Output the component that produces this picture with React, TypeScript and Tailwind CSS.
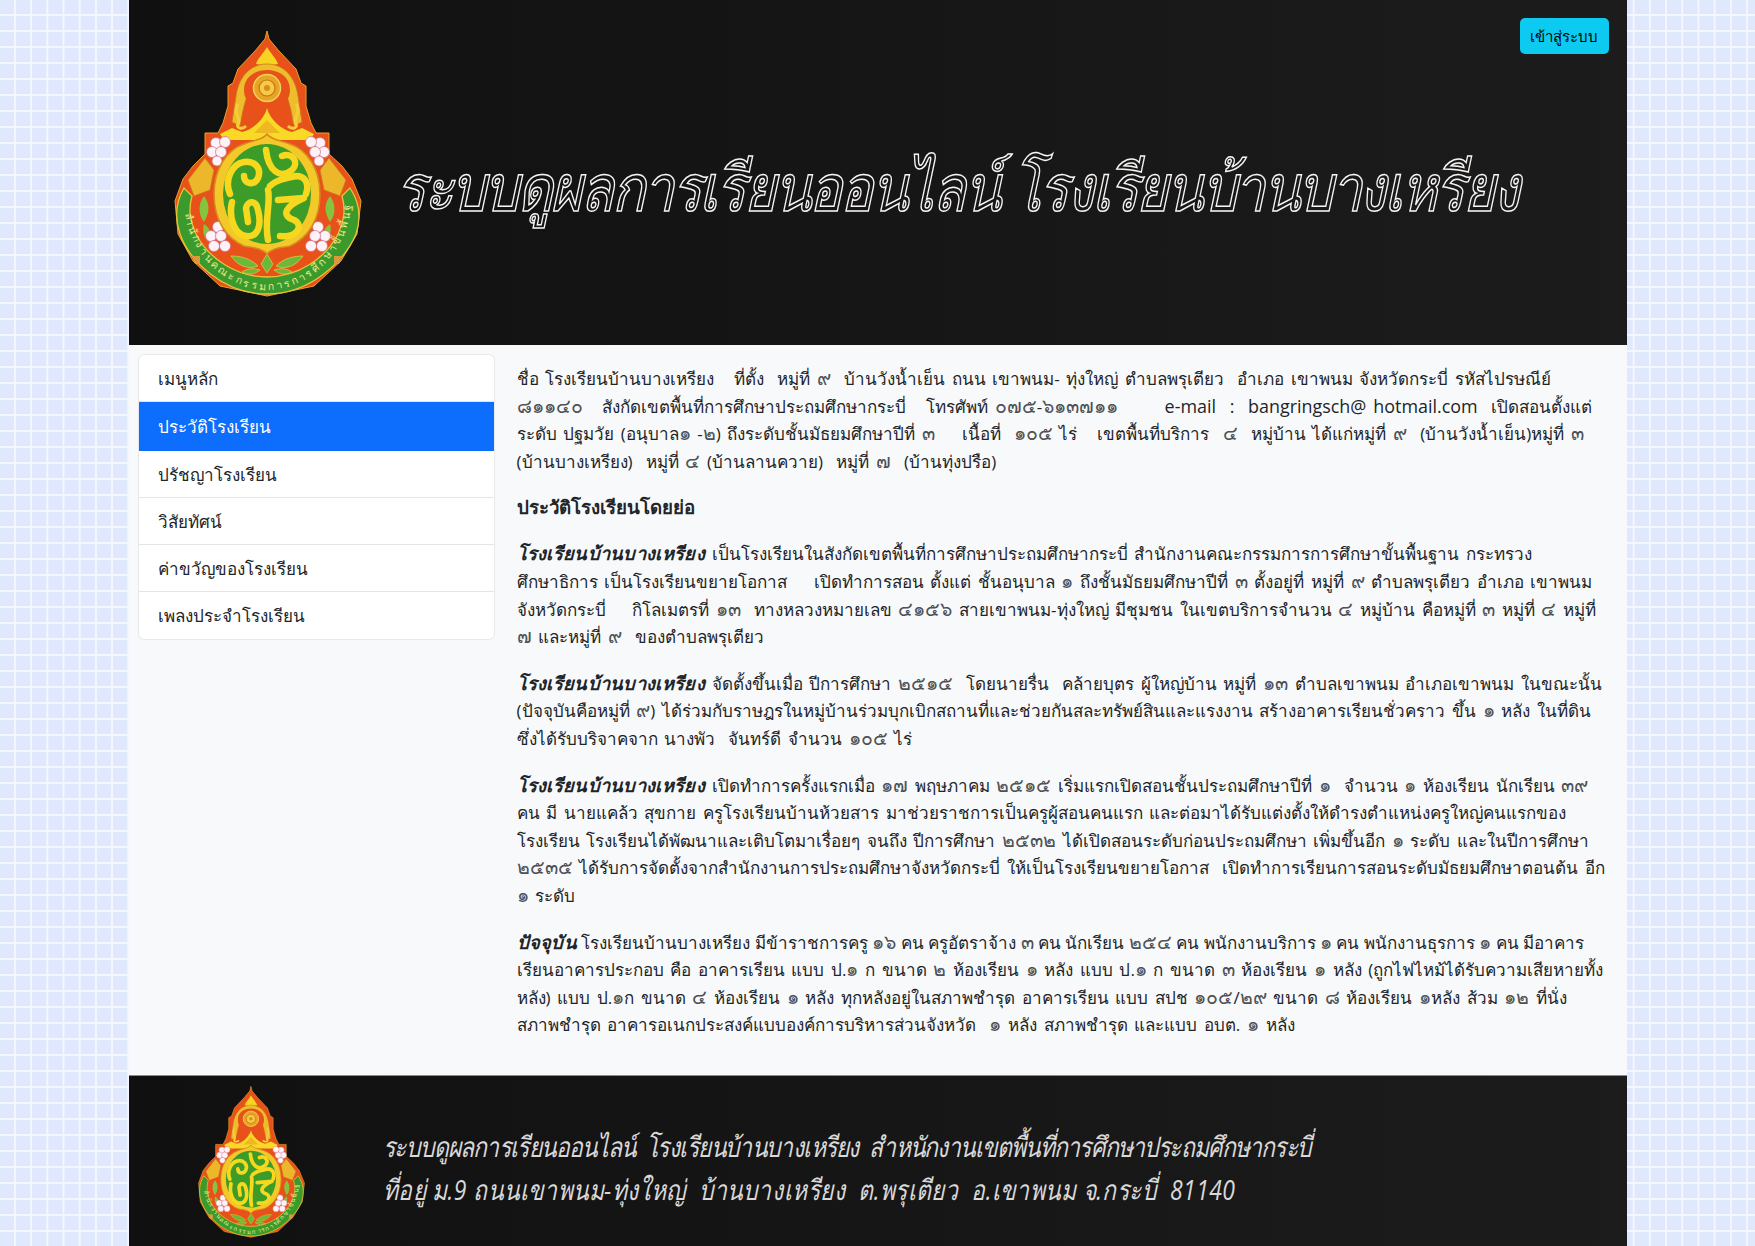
import React from 'react'

const menu = ['เมนูหลัก', 'ประวัติโรงเรียน', 'ปรัชญาโรงเรียน', 'วิสัยทัศน์', 'ค่าขวัญของโรงเรียน', 'เพลงประจำโรงเรียน']

const paragraphs: { lead?: string; tightFirst?: boolean; lines: string[] }[] = [
    {
        lines: [
            'ชื่อ โรงเรียนบ้านบางเหรียง   ที่ตั้ง  หมู่ที่ ๙  บ้านวังน้ำเย็น ถนน เขาพนม- ทุ่งใหญ่ ตำบลพรุเตียว  อำเภอ เขาพนม จังหวัดกระบี่ รหัสไปรษณีย์',
            '๘๑๑๔๐   สังกัดเขตพื้นที่การศึกษาประถมศึกษากระบี่   โทรศัพท์ ๐๗๕-๖๑๓๗๑๑       e-mail  :  bangringsch@ hotmail.com  เปิดสอนตั้งแต่',
            'ระดับ ปฐมวัย (อนุบาล๑ -๒) ถึงระดับชั้นมัธยมศึกษาปีที่ ๓    เนื้อที่  ๑๐๕ ไร่   เขตพื้นที่บริการ  ๔  หมู่บ้าน ได้แก่หมู่ที่ ๙  (บ้านวังน้ำเย็น)หมู่ที่ ๓',
            '(บ้านบางเหรียง)  หมู่ที่ ๔ (บ้านลานควาย)  หมู่ที่ ๗  (บ้านทุ่งปรือ)',
        ],
    },
    {
        lead: 'โรงเรียนบ้านบางเหรียง',
        lines: [
            ' เป็นโรงเรียนในสังกัดเขตพื้นที่การศึกษาประถมศึกษากระบี่ สำนักงานคณะกรรมการการศึกษาขั้นพื้นฐาน กระทรวง',
            'ศึกษาธิการ เป็นโรงเรียนขยายโอกาส    เปิดทำการสอน ตั้งแต่ ชั้นอนุบาล ๑ ถึงชั้นมัธยมศึกษาปีที่ ๓ ตั้งอยู่ที่ หมู่ที่ ๙ ตำบลพรุเตียว อำเภอ เขาพนม',
            'จังหวัดกระบี่    กิโลเมตรที่ ๑๓  ทางหลวงหมายเลข ๔๑๕๖ สายเขาพนม-ทุ่งใหญ่ มีชุมชน ในเขตบริการจำนวน ๔ หมู่บ้าน คือหมู่ที่ ๓ หมู่ที่ ๔ หมู่ที่',
            '๗ และหมู่ที่ ๙  ของตำบลพรุเตียว',
        ],
    },
    {
        lead: 'โรงเรียนบ้านบางเหรียง',
        lines: [
            ' จัดตั้งขึ้นเมื่อ ปีการศึกษา ๒๕๑๕  โดยนายรื่น  คล้ายบุตร ผู้ใหญ่บ้าน หมู่ที่ ๑๓ ตำบลเขาพนม อำเภอเขาพนม ในขณะนั้น',
            '(ปัจจุบันคือหมู่ที่ ๙) ได้ร่วมกับราษฎรในหมู่บ้านร่วมบุกเบิกสถานที่และช่วยกันสละทรัพย์สินและแรงงาน สร้างอาคารเรียนชั่วคราว ขึ้น ๑ หลัง ในที่ดิน',
            'ซึ่งได้รับบริจาคจาก นางพัว  จันทร์ดี จำนวน ๑๐๕ ไร่',
        ],
    },
    {
        lead: 'โรงเรียนบ้านบางเหรียง',
        lines: [
            ' เปิดทำการครั้งแรกเมื่อ ๑๗ พฤษภาคม ๒๕๑๕ เริ่มแรกเปิดสอนชั้นประถมศึกษาปีที่ ๑  จำนวน ๑ ห้องเรียน นักเรียน ๓๙',
            'คน มี นายแคล้ว สุขกาย ครูโรงเรียนบ้านห้วยสาร มาช่วยราชการเป็นครูผู้สอนคนแรก และต่อมาได้รับแต่งตั้งให้ดำรงตำแหน่งครูใหญ่คนแรกของ',
            'โรงเรียน โรงเรียนได้พัฒนาและเติบโตมาเรื่อยๆ จนถึง ปีการศึกษา ๒๕๓๒ ได้เปิดสอนระดับก่อนประถมศึกษา เพิ่มขึ้นอีก ๑ ระดับ และในปีการศึกษา',
            '๒๕๓๕ ได้รับการจัดตั้งจากสำนักงานการประถมศึกษาจังหวัดกระบี่ ให้เป็นโรงเรียนขยายโอกาส  เปิดทำการเรียนการสอนระดับมัธยมศึกษาตอนต้น อีก',
            '๑ ระดับ',
        ],
    },
    {
        lead: 'ปัจจุบัน',
        tightFirst: true,
        lines: [
            ' โรงเรียนบ้านบางเหรียง มีข้าราชการครู ๑๖ คน ครูอัตราจ้าง ๓ คน นักเรียน ๒๕๔ คน พนักงานบริการ ๑ คน พนักงานธุรการ ๑ คน มีอาคาร',
            'เรียนอาคารประกอบ คือ อาคารเรียน แบบ ป.๑ ก ขนาด ๒ ห้องเรียน ๑ หลัง แบบ ป.๑ ก ขนาด ๓ ห้องเรียน ๑ หลัง (ถูกไฟไหม้ได้รับความเสียหายทั้ง',
            'หลัง) แบบ ป.๑ก ขนาด ๔ ห้องเรียน ๑ หลัง ทุกหลังอยู่ในสภาพชำรุด อาคารเรียน แบบ สปช ๑๐๕/๒๙ ขนาด ๘ ห้องเรียน ๑หลัง ส้วม ๑๒ ที่นั่ง',
            'สภาพชำรุด อาคารอเนกประสงค์แบบองค์การบริหารส่วนจังหวัด  ๑ หลัง สภาพชำรุด และแบบ อบต. ๑ หลัง',
        ],
    },
]

// thai digits and the mail address are set a bit larger than the rest
const Line: React.FC<{ text: string }> = ({ text }) => (
    <>
        {text.split(/([๐-๙]+|e-mail.*\.com)/).map((part, i) => {
            if (/^[๐-๙]/.test(part)) return <span key={i} className="text-[19.5px] font-light leading-none text-[#4d5257]">{part}</span>
            if (part.startsWith('e-mail')) return <span key={i} className="text-[17.92px] leading-none">{part}</span>
            return part
        })}
    </>
)

const Logo: React.FC<{ className: string }> = ({ className }) => (
    <svg viewBox="0 0 188 266" className={className}>
        <defs>
            <path id="band" d="M10 172 C11 222 52 260 93 260 C134 260 175 222 177 172" />
        </defs>
        {/* outer drop */}
        <path d="M93 1 L95 9 L105 21 L122 39 L127 53 L132 56 L132 76 L137 93 L142 103 L155 103 L155 124 L168 136 L178 149 L187 171 L183 204 L167 231 L140 256 L93 266 L46 256 L19 231 L4 204 L1 171 L9 149 L19 136 L31 124 L31 103 L44 103 L49 93 L54 76 L54 56 L59 53 L64 39 L81 21 L91 9 Z" fill="#e9511a" stroke="#e8a325" strokeWidth="1" />
        {/* top flame */}
        <path d="M93 17 C97 24 102 28 104 34 L93 36 L82 34 C84 28 89 24 93 17 Z" fill="#f8d422" />
        <path d="M93 34 C112 34 122 50 124 66 L128 92 L120 96 C116 76 114 54 93 44 C72 54 70 76 66 96 L58 92 L62 66 C64 50 74 34 93 34 Z" fill="#eebd2c" stroke="#c8791c" strokeWidth="0.8" />
        {/* arch round the wheel */}
        <path d="M93 40 C104 40 116 46 116 60 C116 70 110 70 112 80 L120 96 L104 94 C100 88 96 84 93 76 C90 84 86 88 82 94 L66 96 L74 80 C76 70 70 70 70 60 C70 46 82 40 93 40 Z" fill="#e9511a" />
        <circle cx="93" cy="58" r="13.5" fill="#e6a523" stroke="#f3d15c" strokeWidth="1.5" />
        <circle cx="93" cy="58" r="8" fill="#f3cb45" stroke="#c8701c" strokeWidth="1.2" />
        <circle cx="93" cy="58" r="3" fill="#dc8a1f" />
        {/* side scrolls */}
        <path d="M64 74 C58 84 68 88 64 94 C62 98 68 100 72 96 M122 74 C128 84 118 88 122 94 C124 98 118 100 114 96" fill="none" stroke="#f3cd3a" strokeWidth="3" />
        {/* roof */}
        <path d="M93 78 C90 90 78 100 68 102 L58 98 L46 104 L50 110 L136 110 L140 104 L128 98 L118 102 C108 100 96 90 93 78 Z" fill="#f8d925" />
        <path d="M93 90 L80 103 L106 103 Z" fill="#efb822" />
        {/* green band */}
        <path d="M10 158 C3 170 0 186 6 204 C16 232 50 264 93 264 C136 264 170 232 182 204 C188 186 184 170 176 158 L168 166 C172 180 170 190 164 204 C152 228 124 247 93 247 C62 247 34 228 22 204 C16 190 14 180 18 166 Z" fill="#3a9b2c" stroke="#e8c33a" strokeWidth="1.3" />
        {/* naga and leaves either side of the oval */}
        <path d="M14 150 L31 128 L40 140 L36 160 L20 166 Z M172 150 L155 128 L146 140 L150 160 L166 166 Z" fill="#edb72b" stroke="#c9761c" strokeWidth="0.8" />
        <path d="M30 166 C36 174 36 182 30 192 C24 184 24 174 30 166 Z M156 166 C150 174 150 182 156 192 C162 184 162 174 156 166 Z M30 194 C36 198 38 204 36 212 C30 208 28 202 30 194 Z M156 194 C150 198 148 204 150 212 C156 208 158 202 156 194 Z" fill="#86c440" />
        {/* lotus */}
        <g fill="#fdf3f6" stroke="#cf6a8c" strokeWidth="0.7">
            <circle cx="42" cy="113" r="5.5" /><circle cx="51" cy="112" r="5.5" /><circle cx="38" cy="122" r="5.5" /><circle cx="47" cy="122" r="5.5" /><circle cx="43" cy="131" r="5" />
            <circle cx="146" cy="113" r="5.5" /><circle cx="137" cy="112" r="5.5" /><circle cx="150" cy="122" r="5.5" /><circle cx="141" cy="122" r="5.5" /><circle cx="145" cy="131" r="5" />
            <circle cx="44" cy="197" r="5.5" /><circle cx="37" cy="206" r="5.5" /><circle cx="47" cy="206" r="5.5" /><circle cx="40" cy="216" r="5.5" /><circle cx="51" cy="216" r="5.5" />
            <circle cx="144" cy="197" r="5.5" /><circle cx="151" cy="206" r="5.5" /><circle cx="141" cy="206" r="5.5" /><circle cx="148" cy="216" r="5.5" /><circle cx="137" cy="216" r="5.5" />
        </g>
        {/* leaves under the oval */}
        <path d="M93 224 L87 234 L93 243 L99 234 Z M57 226 C66 226 76 228 84 236 C74 240 64 236 57 226 Z M129 226 C120 226 110 228 102 236 C112 240 122 236 129 226 Z M68 242 C74 238 80 238 86 240 C80 245 74 245 68 242 Z M118 242 C112 238 106 238 100 240 C106 245 112 245 118 242 Z" fill="#6cb83a" stroke="#e9d03c" strokeWidth="0.7" />
        <path d="M18 226 L26 226 L26 234 L21 234 Z M168 226 L160 226 L160 234 L165 234 Z" fill="#d99a3c" />
        {/* oval */}
        <path d="M93 104 C97 110 106 110 116 114 C134 120 146 140 146 164 C146 190 134 208 116 216 C106 218 98 218 93 224 C88 218 80 218 70 216 C52 208 40 190 40 164 C40 140 52 120 70 114 C80 110 89 110 93 104 Z" fill="#f3c92a" stroke="#d78a1f" strokeWidth="1.5" />
        <ellipse cx="93" cy="164" rx="44" ry="50" fill="#3d9c27" />
        <g fill="none" stroke="#f6d81f" strokeWidth="6.5" strokeLinecap="round" strokeLinejoin="round">
            <path d="M56 164 C50 150 58 134 70 132 C80 130 88 138 84 148 C80 156 70 154 70 146" />
            <path d="M92 120 C94 140 106 150 118 140 C126 132 118 122 108 126" />
            <path d="M132 164 C136 152 130 146 122 146 C112 148 102 150 96 156" />
            <path d="M58 172 C54 190 62 205 72 206 C84 208 88 195 84 180 C82 170 74 170 72 178 L74 192" />
            <path d="M94 160 C97 172 90 192 94 210" />
            <path d="M104 170 L130 168 C112 176 106 185 120 190 C130 195 124 208 106 206" />
        </g>
        <text fontSize="10.5" fill="#eee88a" fontFamily="'Noto Sans', sans-serif">
            <textPath href="#band" startOffset="12" textLength="270" lengthAdjust="spacing">สำนักงานคณะกรรมการการศึกษาขั้นพื้นฐาน</textPath>
        </text>
    </svg>
)

const App: React.FC = () => {
    return (
        <div className="min-h-screen bg-[#dfe8fd] bg-[linear-gradient(#f4f7ff_2px,transparent_2px),linear-gradient(90deg,#f4f7ff_2px,transparent_2px)] bg-[size:16.2px_16px] bg-[position:14px_14px] font-['Open_Sans','Noto_Sans',sans-serif] text-[#212529]">
            <div className="mx-auto w-[1498px] bg-[#f8f9fa]">
                <header className="relative flex h-[345px] items-center bg-[linear-gradient(90deg,#101010,#1d1c1c)] pl-[45px]">
                    <Logo className="h-[266px] w-[188px] shrink-0 -translate-y-[10px] overflow-visible" />
                    <div className="ml-[34px] origin-left translate-y-[14px] scale-x-[.85] whitespace-nowrap text-[65px] font-thin italic leading-none tracking-[-2.5px] text-transparent [-webkit-text-stroke:1.5px_#f7f5f3]">
                        ระบบดูผลการเรียนออนไลน์ โรงเรียนบ้านบางเหรียง
                    </div>
                    <button className="absolute right-[18px] top-[18px] h-[36px] w-[89px] rounded-[5px] bg-[#0dcaf0] text-[15px] text-black">เข้าสู่ระบบ</button>
                </header>

                <main className="flex h-[730px] items-start gap-[23px] pl-[10px] pr-[12px] pt-[10px]">
                    <ul className="w-[355px] shrink-0 rounded-[5px] bg-white text-[17px] shadow-[0_0_0_1px_#e8e9eb]">
                        {menu.map((m, i) => (
                            <li key={m} className={i === 1 ? 'flex h-[49px] items-center bg-[#0d6efd] px-[19px] font-medium text-white' : 'flex h-[47px] items-center border-b border-[#e4e5e7] px-[19px] pt-px last:border-b-0'}>
                                {m}
                            </li>
                        ))}
                    </ul>
                    <article className="min-w-0 flex-1 whitespace-pre pt-[10px] text-[17px] leading-[27.6px] [word-spacing:2.2px]">
                        {paragraphs.map((p, i) => (
                            <React.Fragment key={i}>
                                <p className={i === 0 ? 'mb-[17.5px]' : 'mb-[19px]'}>
                                    {p.lead && <b className="text-[18.4px] italic leading-none tracking-[0.3px]">{p.lead}</b>}
                                    {p.lines.map((l, j) => (
                                        <React.Fragment key={j}>
                                            {j > 0 && <br />}
                                            {p.tightFirst && j === 0 ? (
                                                <span className="[word-spacing:0px]"><Line text={l} /></span>
                                            ) : (
                                                <Line text={l} />
                                            )}
                                        </React.Fragment>
                                    ))}
                                </p>
                                {i === 0 && <p className="mb-[20px] text-[18.7px] font-bold">ประวัติโรงเรียนโดยย่อ</p>}
                            </React.Fragment>
                        ))}
                    </article>
                </main>

                <footer className="flex h-[171px] items-center border-t border-[#8a8a8a] bg-[linear-gradient(90deg,#101010,#1d1c1c)] pl-[69px]">
                    <Logo className="h-[153px] w-[107px] shrink-0 overflow-visible" />
                    <div className="ml-[78px] origin-left translate-y-[7px] scale-x-[.82] whitespace-pre text-[28px] italic leading-[43px] tracking-[-1px] text-[#d9d8d7]">
                        ระบบดูผลการเรียนออนไลน์  โรงเรียนบ้านบางเหรียง  สำหนักงานเขตพื้นที่การศึกษาประถมศึกษากระบี่<br />
                        <span className="tracking-[0.5px]">ที่อยู่ ม.9 ถนนเขาพนม-ทุ่งใหญ่  บ้านบางเหรียง  ต.พรุเตียว  อ.เขาพนม จ.กระบี่  81140</span>
                    </div>
                </footer>
            </div>
        </div>
    )
}

export default App
